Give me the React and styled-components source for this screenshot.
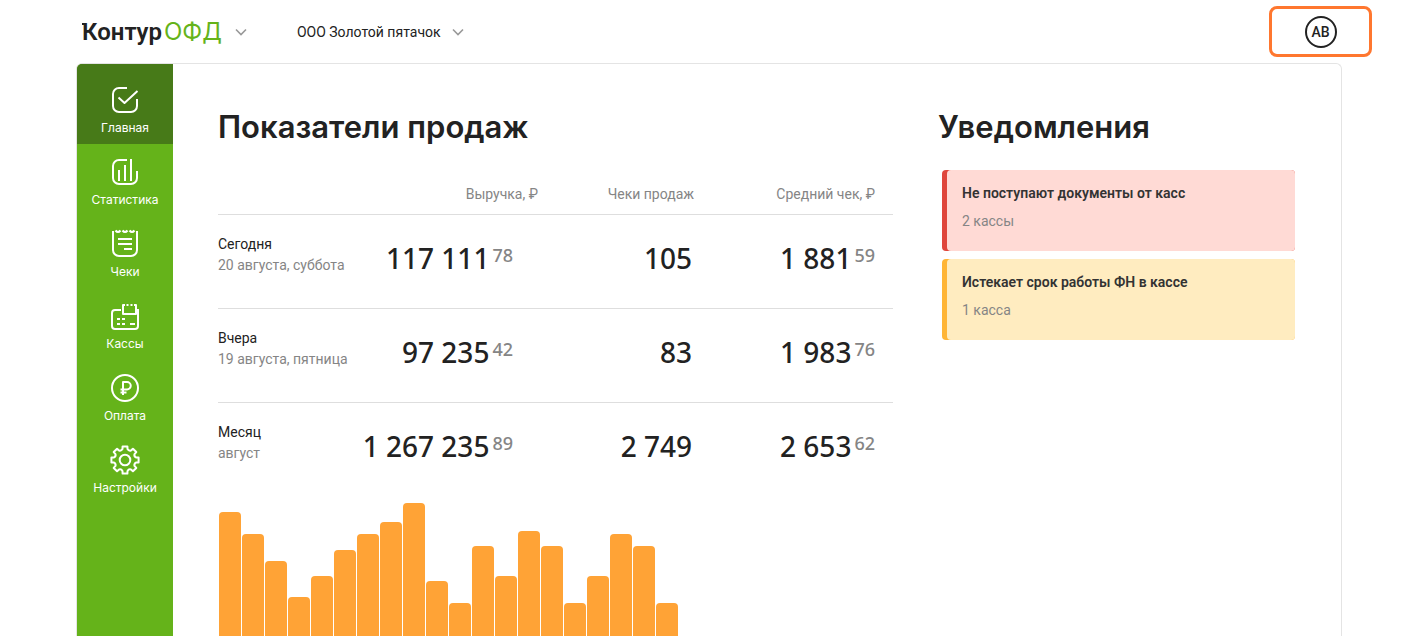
import React from 'react'
import styled, {createGlobalStyle, css} from 'styled-components'

const textFont = css`font-family: Roboto, 'Noto Sans', sans-serif;`
const digitFont = css`font-family: 'Noto Sans', 'Open Sans', sans-serif;`

const GlobalStyle = createGlobalStyle`
  * { box-sizing: border-box; }

  body {
    margin: 0;
    background: #fff;
    color: #222;
    font-size: 14px;
    line-height: 20px;
    ${textFont}
  }

  button {
    font: inherit;
    color: inherit;
    cursor: pointer;
  }
`

const Page = styled.div`
  display: flex;
  flex-direction: column;
  height: 100vh;
  overflow: hidden;
`

const Header = styled.header`
  display: flex;
  align-items: center;
  flex: none;
  height: 63px;
  padding: 0 46px 0 82px;
`

const Picker = styled.button`
  display: flex;
  align-items: center;
  gap: ${p => p.$gap}px;
  padding: 0;
  margin-right: 50px;
  border: 0;
  background: none;
`

const Logo = styled.span`
  display: flex;
  gap: 2px;
  font-size: 24px;
  line-height: 28px;
`

const LogoName = styled.span`
  position: relative;
  font-weight: 600;

  /* serif on the first letter */
  &::before {
    content: '';
    position: absolute;
    top: 5px;
    left: 0;
    width: 4px;
    height: 2px;
    background: #222;
  }
`

const LogoProduct = styled.span`
  color: #65b31a;
  font-family: Inter, sans-serif;
`

const Profile = styled.button`
  display: flex;
  align-items: center;
  justify-content: center;
  width: 103px;
  height: 51px;
  margin-left: auto;
  border: 3px solid #ff772f;
  border-radius: 8px;
  background: #fff;
`

const Avatar = styled.span`
  width: 32px;
  height: 32px;
  border: 2px solid #222;
  border-radius: 50%;
  font-weight: 500;
  line-height: 28px;
`

const Shell = styled.div`
  display: flex;
  flex: 1;
  min-height: 0;
  margin: 0 76px;
  border: 1px solid #e4e4e4;
  border-bottom: 0;
  border-radius: 6px 6px 0 0;
`

const Sidebar = styled.nav`
  flex: none;
  width: 96px;
  border-top-left-radius: 5px;
  background: #65b31a;
  overflow: hidden;
`

const NavItem = styled.a`
  display: flex;
  flex-direction: column;
  align-items: center;
  gap: 5px;
  padding: 14px 0 7px;
  color: #fff;
  font-family: Inter, sans-serif;
  font-size: 12px;
  line-height: 18px;
  text-decoration: none;
  background: ${p => p.$active ? '#477a18' : 'none'};

  &:first-child {
    padding-top: 22px;
  }
`

const Content = styled.main`
  display: grid;
  grid-template-columns: minmax(0, 1fr) 357px;
  column-gap: 45px;
  flex: 1;
  padding: 43px 46px 0 45px;
`

const Title = styled.h1`
  margin: 0;
  font-family: Inter, sans-serif;
  font-size: 31px;
  font-weight: 600;
  line-height: 40px;
`

const SalesTable = styled.table`
  width: 100%;
  margin-top: 23px;
  border-collapse: collapse;
  table-layout: fixed;
`

const HeadCell = styled.th`
  width: ${p => p.$width ? p.$width + 'px' : 'auto'};
  height: 44px;
  padding: 4px ${p => p.$right || 0}px 0 0;
  border-bottom: 1px solid #dedede;
  color: #858585;
  font-weight: 400;
  text-align: right;
`

const SalesRow = styled.tr`
  height: 94px;

  &:not(:last-child) > * {
    border-bottom: 1px solid #dedede;
  }
`

const Period = styled.th`
  padding: 19px 0 0;
  font-weight: 400;
  line-height: 21px;
  text-align: left;
  vertical-align: top;
  white-space: nowrap;
`

const PeriodDate = styled.div`
  color: #858585;
`

const Value = styled.td`
  padding: 23px ${p => p.$right}px 0 0;
  ${digitFont}
  font-size: 28px;
  font-weight: 500;
  line-height: 40px;
  text-align: right;
  vertical-align: top;
  white-space: nowrap;
`

const Kopecks = styled.span`
  margin-left: 3px;
  color: #858585;
  font-size: 18px;
  line-height: 18px;
  vertical-align: 7px;
`

const Chart = styled.div`
  display: flex;
  align-items: flex-end;
  gap: 1px;
  height: 133px;
  margin: 7px 0 0 1px;
`

const Bar = styled.div`
  width: 22px;
  border-radius: 4px 4px 0 0;
  background: #ffa336;
`

const Notices = styled.div`
  display: flex;
  flex-direction: column;
  gap: 8px;
  margin: 23px 0 0 4px;
`

const tones = {
  danger: {edge: '#df463c', back: '#ffdad5'},
  warning: {edge: '#ffb536', back: '#ffecc0'},
}

const Notice = styled.section`
  height: 81px;
  padding-left: 5px;
  border-radius: 4px;
  background: ${p => tones[p.$tone].edge};
`

const NoticeBody = styled.div`
  height: 100%;
  padding: 13px 15px;
  border-radius: 4px;
  background: ${p => tones[p.$tone].back};
`

const NoticeTitle = styled.h2`
  margin: 0 0 8px;
  color: #333;
  font-size: 14px;
  font-weight: 600;
  line-height: 20px;
`

const NoticeText = styled.p`
  margin: 0;
  color: #858585;
`

const Chevron = () => (
  <svg width="12" height="8" viewBox="0 0 12 8" fill="none" stroke="#999" strokeWidth="1.6">
    <path d="M1 1.5L6 6.5L11 1.5" />
  </svg>
)

// eight teeth around the centre of a 28px box
const gearPath = Array.from({length: 8}, (_, i) => {
  const at = (deg, r) => {
    const a = (i * 45 + deg - 90) * Math.PI / 180
    return (14 + r * Math.cos(a)).toFixed(2) + ' ' + (14 + r * Math.sin(a)).toFixed(2)
  }
  return `${i ? 'L' : 'M'}${at(-10, 13.8)}L${at(10, 13.8)}L${at(13, 11.2)}Q${at(22.5, 9.6)} ${at(32, 11.2)}`
}).join('') + 'Z'

const icons = {
  home: <>
    <path d="M16 2H8a6 6 0 0 0-6 6v12a6 6 0 0 0 6 6h12a6 6 0 0 0 6-6v-7" />
    <path d="M7.5 11.5l6 5.5L26.5 5" />
  </>,
  stats: <>
    <path d="M16 2H8a6 6 0 0 0-6 6v12a6 6 0 0 0 6 6h12a6 6 0 0 0 6-6v-7" />
    <path d="M8 12v11M14 7v16M20 1v22" />
  </>,
  receipts: <>
    <path d="M2 1v19a6 6 0 0 0 6 6h12a6 6 0 0 0 6-6V1" />
    <path d="M4.5 .5q2.500 3 5 0M11.500 .5q2.500 3 5 0M18.500 .5q2.500 3 5 0" />
    <path d="M7 9h14M7 14h14M13 19h8" />
  </>,
  registers: <>
    <path d="M10 8H4a3 3 0 0 0-3 3v13a3 3 0 0 0 3 3h20a3 3 0 0 0 3-3V7" />
    <path d="M14 3h-2v9h13V3h-2M15.5 3h2M19.5 3h2" />
    <path d="M6 17h3M11 17h3M6 22h3M11 22h3M19 22h5" />
  </>,
  payment: <>
    <circle cx="14" cy="14" r="13" />
    <path d="M12 21V8h4a3.5 3.5 0 0 1 0 7.5H9.5M9.5 18.5h6" />
  </>,
  settings: <>
    <path d={gearPath} />
    <circle cx="14" cy="14" r="5.3" />
  </>,
}

const NavIcon = ({name}) => (
  <svg width="28" height="28" viewBox="0 0 28 28" fill="none" stroke="#fff" strokeWidth="2" strokeLinejoin="round" overflow="visible">
    {icons[name]}
  </svg>
)

const menu = [
  {icon: 'home', label: 'Главная'},
  {icon: 'stats', label: 'Статистика'},
  {icon: 'receipts', label: 'Чеки'},
  {icon: 'registers', label: 'Кассы'},
  {icon: 'payment', label: 'Оплата'},
  {icon: 'settings', label: 'Настройки'},
]

const sales = [
  {period: 'Сегодня', date: '20 августа, суббота', revenue: ['117 111', '78'], count: '105', average: ['1 881', '59']},
  {period: 'Вчера', date: '19 августа, пятница', revenue: ['97 235', '42'], count: '83', average: ['1 983', '76']},
  {period: 'Месяц', date: 'август', revenue: ['1 267 235', '89'], count: '2 749', average: ['2 653', '62']},
]

const bars = [124, 102, 75, 39, 60, 86, 102, 114, 133, 55, 33, 90, 60, 105, 90, 33, 60, 102, 90, 33]

const notices = [
  {tone: 'danger', title: 'Не поступают документы от касс', text: '2 кассы'},
  {tone: 'warning', title: 'Истекает срок работы ФН в кассе', text: '1 касса'},
]

export default function App() {
  return (
    <>
      <GlobalStyle />
      <Page>
        <Header>
          <Picker $gap={13}>
            <Logo>
              <LogoName>Контур</LogoName>
              <LogoProduct>ОФД</LogoProduct>
            </Logo>
            <Chevron />
          </Picker>
          <Picker $gap={11}>
            ООО Золотой пятачок
            <Chevron />
          </Picker>
          <Profile><Avatar>АВ</Avatar></Profile>
        </Header>
        <Shell>
          <Sidebar>
            {menu.map((item, i) => (
              <NavItem key={item.icon} href="#" $active={i === 0}>
                <NavIcon name={item.icon} />
                {item.label}
              </NavItem>
            ))}
          </Sidebar>
          <Content>
            <div>
              <Title>Показатели продаж</Title>
              <SalesTable>
                <thead>
                  <tr>
                    <HeadCell $width={142} />
                    <HeadCell $width={178}>Выручка, ₽</HeadCell>
                    <HeadCell $width={156}>Чеки продаж</HeadCell>
                    <HeadCell $right={18}>Средний чек, ₽</HeadCell>
                  </tr>
                </thead>
                <tbody>
                  {sales.map(row => (
                    <SalesRow key={row.period}>
                      <Period scope="row">
                        {row.period}
                        <PeriodDate>{row.date}</PeriodDate>
                      </Period>
                      <Value $right={25}>{row.revenue[0]}<Kopecks>{row.revenue[1]}</Kopecks></Value>
                      <Value $right={2}>{row.count}</Value>
                      <Value $right={18}>{row.average[0]}<Kopecks>{row.average[1]}</Kopecks></Value>
                    </SalesRow>
                  ))}
                </tbody>
              </SalesTable>
              <Chart>
                {bars.map((height, i) => <Bar key={i} style={{height}} />)}
              </Chart>
            </div>
            <aside>
              <Title as="h2">Уведомления</Title>
              <Notices>
                {notices.map(n => (
                  <Notice key={n.tone} $tone={n.tone}>
                    <NoticeBody $tone={n.tone}>
                      <NoticeTitle>{n.title}</NoticeTitle>
                      <NoticeText>{n.text}</NoticeText>
                    </NoticeBody>
                  </Notice>
                ))}
              </Notices>
            </aside>
          </Content>
        </Shell>
      </Page>
    </>
  )
}
